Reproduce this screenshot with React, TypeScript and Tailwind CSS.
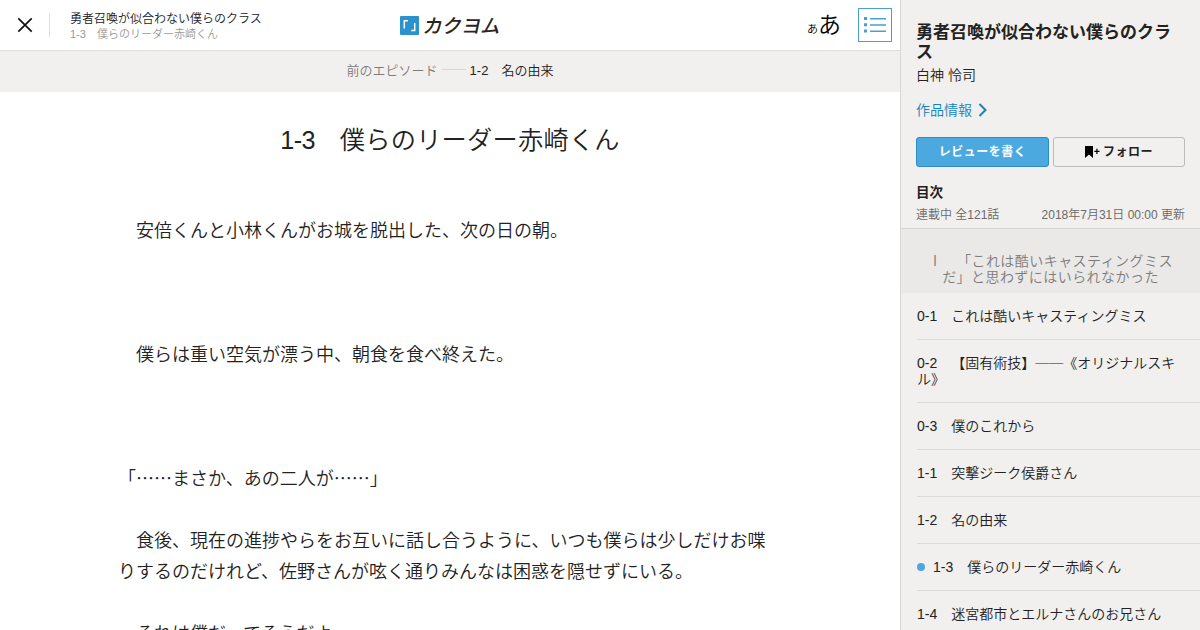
import { Fragment } from "react";

type Episode = {
  title: string;
  current?: boolean;
};

const WORK_TITLE = "勇者召喚が似合わない僕らのクラス";
const EPISODE_TITLE = "1-3　僕らのリーダー赤崎くん";

const episodes: Episode[] = [
  { title: "0-1　これは酷いキャスティングミス" },
  { title: "0-2　【固有術技】──《オリジナルスキル》" },
  { title: "0-3　僕のこれから" },
  { title: "1-1　突撃ジーク侯爵さん" },
  { title: "1-2　名の由来" },
  { title: EPISODE_TITLE, current: true },
  { title: "1-4　迷宮都市とエルナさんのお兄さん" },
];

// an empty string is a blank line
const lines = [
  "　安倍くんと小林くんがお城を脱出した、次の日の朝。",
  "",
  "",
  "",
  "　僕らは重い空気が漂う中、朝食を食べ終えた。",
  "",
  "",
  "",
  "「……まさか、あの二人が……」",
  "",
  "　食後、現在の進捗やらをお互いに話し合うように、いつも僕らは少しだけお喋りするのだけれど、佐野さんが呟く通りみんなは困惑を隠せずにいる。",
  "",
  "　それは僕だってそうだよ。",
];

// dashes and ellipses must come from the Japanese font to be full width
function JapaneseText({ text }: { text: string }) {
  return text.split(/(──|……)/).map((part, i) =>
    part === "──" || part === "……" ? (
      <span className="font-['Noto_Sans_CJK_JP',sans-serif] leading-[0]" key={i}>
        {part}
      </span>
    ) : (
      <Fragment key={i}>{part}</Fragment>
    ),
  );
}

function Logo() {
  return (
    <a className="flex items-center" href="#" aria-label="カクヨム">
      <svg className="shrink-0" width="19" height="19" viewBox="0 0 19 19" fill="none">
        <rect width="19" height="19" rx="1" fill="#2b92cb" />
        <path d="M4.3 12.5V4.7H8" stroke="#fff" strokeWidth="1.5" />
        <path d="M11.2 14.6h3.5V7" stroke="#fff" strokeWidth="1.5" />
      </svg>
      <span className="ml-[5px] inline-block -skew-x-12 font-['Noto_Sans_CJK_JP',sans-serif] text-[19.5px] leading-5 font-medium tracking-[-0.3px] whitespace-nowrap text-[#2a2523]">
        カクヨム
      </span>
    </a>
  );
}

function Header() {
  return (
    <header className="grid h-[51px] shrink-0 grid-cols-[400px_100px_400px] items-center border-b border-[#dfdedc] bg-white">
      <div className="flex items-center">
        <button className="ml-[17px] block" type="button" aria-label="閉じる">
          <svg width="16" height="16" viewBox="0 0 16 16" stroke="#111" strokeWidth="1.7">
            <path d="M1.3 1.3l13.4 13.4M14.7 1.3L1.3 14.7" />
          </svg>
        </button>
        <div className="ml-4 flex h-6 items-center border-l border-[#dfdedc] pl-5">
          <div className="pt-1">
            <p className="text-[12px] leading-[15px] whitespace-nowrap">{WORK_TITLE}</p>
            <p className="text-[11px] leading-[15px] whitespace-nowrap text-[#999]">{EPISODE_TITLE}</p>
          </div>
        </div>
      </div>
      <Logo />
      <div className="flex items-center justify-end pr-2">
        <button className="mr-[17px] flex items-baseline pt-1 leading-8 text-black" type="button" aria-label="表示設定">
          <span className="text-[11px]">あ</span>
          <span className="text-[23px]">あ</span>
        </button>
        <button
          className="flex h-[34px] w-[34px] items-center justify-center border border-[#4a9fd0]"
          type="button"
          aria-label="目次"
        >
          <svg width="22" height="16" viewBox="0 0 22 16" fill="#4a9fd0">
            <path d="M0 0h3v3H0zM0 6.3h3v3H0zM0 12.6h3v3H0z" />
            <path d="M6 .9h16v1.5H6zM6 7.2h16v1.5H6zM6 13.5h16V15H6z" />
          </svg>
        </button>
      </div>
    </header>
  );
}

function EpisodeRow({ title, current }: Episode) {
  return (
    <li className="flex items-center border-b border-[#dcdbd9] py-[15px] pr-[15px]">
      {current ? <span className="mr-2 h-2 w-2 shrink-0 rounded-full bg-[#4ba9df]" /> : null}
      <a className="text-[14px] leading-4" href="#">
        <JapaneseText text={title} />
      </a>
    </li>
  );
}

function Sidebar() {
  return (
    <aside className="flex w-[300px] shrink-0 flex-col border-l border-[#d7d6d4] bg-[#f1f0ee]">
      <div className="h-[229px] shrink-0 border-b border-[#d7d6d4] pt-[23px] pr-[15px] pl-[15px]">
        <h2 className="text-[17px] leading-5 font-bold">{WORK_TITLE}</h2>
        <p className="mt-1 text-[14px] leading-4">白神 怜司</p>
        <a className="mt-[19px] flex items-center text-[14px] leading-4 text-[#1383c2]" href="#">
          作品情報
          <svg className="ml-1.5" width="10" height="14" viewBox="0 0 10 14" fill="none" stroke="currentColor" strokeWidth="2">
            <path d="M1.5 1l6 6-6 6" />
          </svg>
        </a>
        <div className="mt-[19px] grid grid-cols-[133px_132px] gap-1 text-[12px] leading-4 font-bold">
          <button
            className="h-[30px] rounded-[3px] border border-[#2e8cc0] bg-[#4ba9df] tracking-[0.5px] text-white"
            type="button"
          >
            レビューを書く
          </button>
          <button
            className="flex h-[30px] items-center justify-center rounded-[3px] border border-[#bdbcba] tracking-[0.5px]"
            type="button"
          >
            <svg className="mr-[3px]" width="15" height="12" viewBox="0 0 15 12" fill="#000">
              <path d="M0 0h8v12l-4-3.4L0 12zM9.3 4.8h5.2V6H9.3z" />
              <path d="M11.3 2.8h1.2V8h-1.2z" />
            </svg>
            フォロー
          </button>
        </div>
        <h3 className="mt-[18px] text-[13.5px] leading-4 font-bold">目次</h3>
        <div className="mt-1.5 flex justify-between text-[12px] leading-4 text-[#6b6a68]">
          <span>連載中 全121話</span>
          <span>2018年7月31日 00:00 更新</span>
        </div>
      </div>
      <p className="h-16 shrink-0 bg-[#eae9e7] px-4 pt-6 text-center text-[14px] leading-4 tracking-[0.45px] whitespace-nowrap text-[#7d7c7a]">
        Ⅰ　「これは酷いキャスティングミス
        <br />
        だ」と思わずにはいられなかった
      </p>
      <ol className="pl-4">
        {episodes.map((episode) => (
          <EpisodeRow key={episode.title} {...episode} />
        ))}
      </ol>
    </aside>
  );
}

export default function App() {
  const [episodeNumber, episodeName] = EPISODE_TITLE.split("　");

  return (
    <div
      className="flex h-[630px] w-[1200px] overflow-hidden bg-white font-['Liberation_Sans','Noto_Sans_CJK_JP',sans-serif] font-[350] text-[#222] [text-spacing-trim:space-all]"
      lang="ja"
    >
      <main className="flex w-[900px] flex-col overflow-hidden">
        <Header />
        <nav className="flex h-[41px] shrink-0 items-center justify-center bg-[#f1f0ee] pb-0.5 text-[13px] leading-4">
          <span className="text-[#7d7c7a]">前のエピソード</span>
          <span className="mx-1 mb-[3px] h-px w-6 bg-[#d7d6d4]" />
          <a href="#">1-2　名の由来</a>
        </nav>
        <article className="px-[118px]">
          <h1 className="pt-[30px] text-center text-[25.2px] leading-9 font-[350] tracking-[0.27px]">
            <span className="tracking-[-0.5px]">{episodeNumber}　</span>
            {episodeName}
          </h1>
          <div className="mt-[58px] text-[18px] leading-[31px]">
            {lines.map((line, i) => (
              <p className="min-h-[31px]" key={i}>
                <JapaneseText text={line} />
              </p>
            ))}
          </div>
        </article>
      </main>
      <Sidebar />
    </div>
  );
}
